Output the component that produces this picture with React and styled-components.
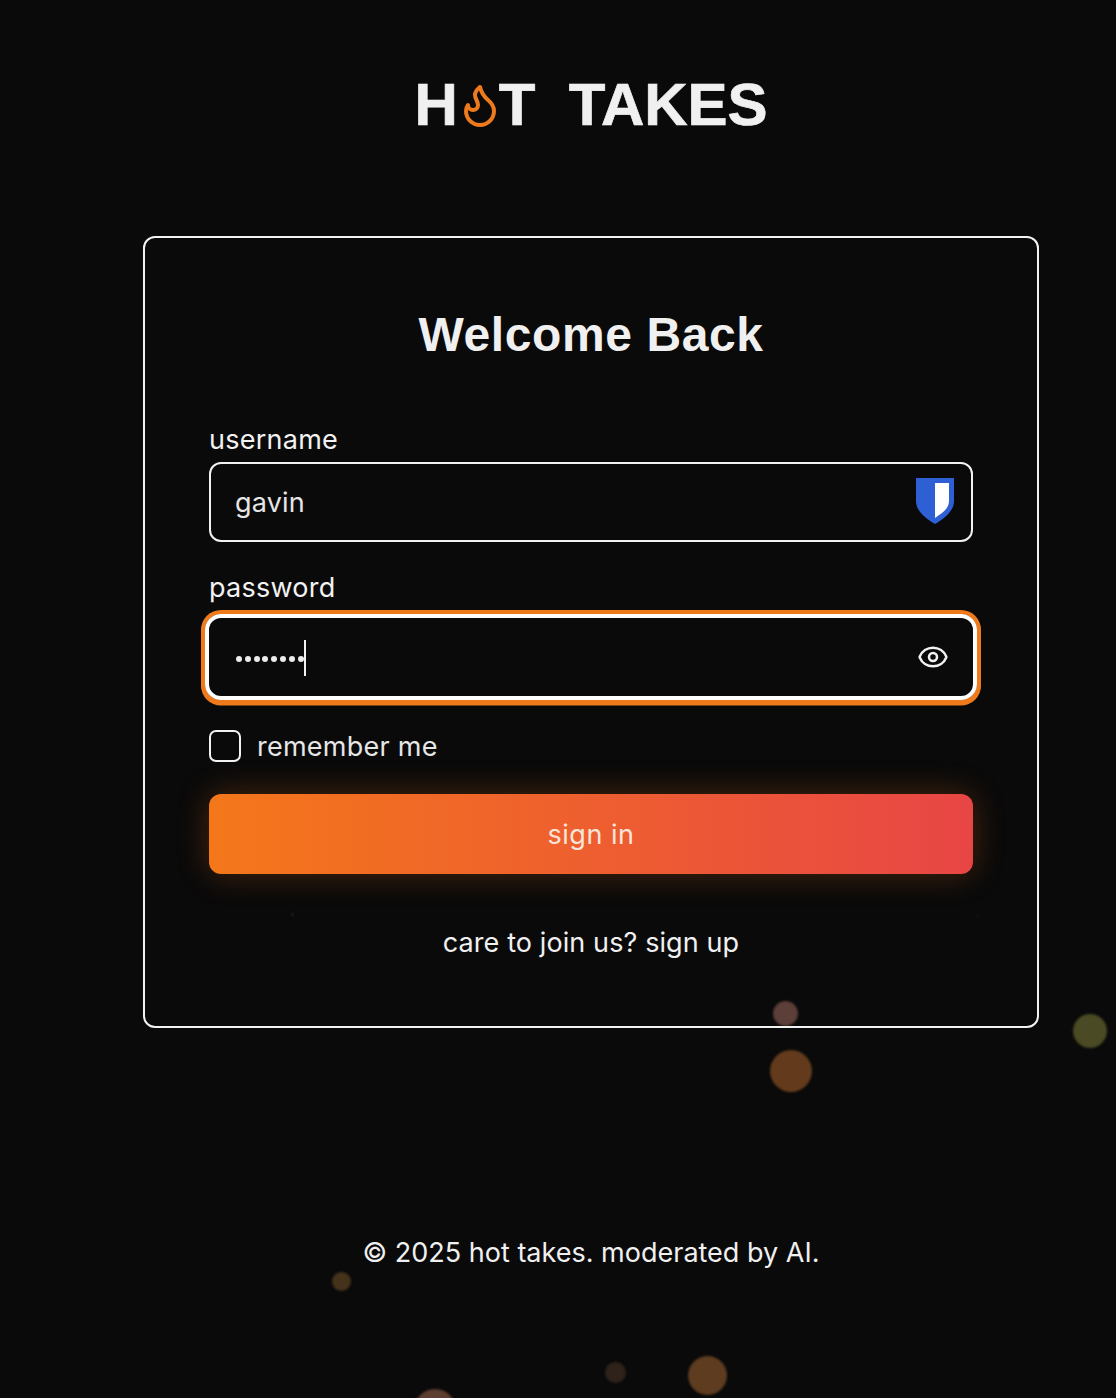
import React from 'react';
import styled, { createGlobalStyle } from 'styled-components';
import { Flame, Eye } from 'lucide-react';

const GlobalStyle = createGlobalStyle`
  html, body {
    margin: 0;
    padding: 0;
    background: #0a0a0a;
  }
  body {
    font-family: Inter, "Liberation Sans", sans-serif;
    color: #f2f2f2;
  }
`;

const particles = [
  { x: 785, y: 1013, size: 25, color: '#5c3f38' },
  { x: 791, y: 1071, size: 42, color: '#633b1c' },
  { x: 1090, y: 1031, size: 34, color: '#4a4a25' },
  { x: 341, y: 1281, size: 19, color: '#44321a' },
  { x: 615, y: 1372, size: 21, color: '#2e221a' },
  { x: 707, y: 1375, size: 39, color: '#5d3c20' },
  { x: 435, y: 1410, size: 42, color: '#5d3f2f' },
  { x: 292, y: 914, size: 3, color: '#222222' },
  { x: 978, y: 916, size: 2, color: '#1c1c1c' },
];

const Page = styled.div`
  position: relative;
  box-sizing: border-box;
  height: 1398px;
  overflow: hidden;
  padding: 74px 77px 0 143px;
  display: flex;
  flex-direction: column;
  align-items: center;
`;

const Particle = styled.div`
  position: absolute;
  width: ${p => p.$size}px;
  height: ${p => p.$size}px;
  left: ${p => p.$x - p.$size / 2}px;
  top: ${p => p.$y - p.$size / 2}px;
  border-radius: 50%;
  background: ${p => p.$color};
  filter: blur(1px);
`;

const Logo = styled.div`
  height: 60px;
  display: flex;
  align-items: center;
  font-family: "Liberation Sans", Arial, sans-serif;
  font-weight: 700;
  font-size: 60px;
  color: #f0f0f0;
  -webkit-text-stroke: 0.7px #f0f0f0;
  white-space: pre;
`;

const LogoFlame = styled(Flame)`
  flex: none;
  margin: 2px -5px 0 -2px;
  color: #ee7a1c;
`;

const Card = styled.main`
  position: relative;
  box-sizing: border-box;
  width: 896px;
  height: 792px;
  margin-top: 102px;
  padding: 64px;
  border: 2px solid #f2f2f2;
  border-radius: 12px;
`;

const Title = styled.h1`
  margin: 2px 0 58px;
  height: 62px;
  line-height: 62px;
  text-align: center;
  font-family: "Liberation Sans", Arial, sans-serif;
  font-size: 48px;
  font-weight: 700;
  letter-spacing: 0.6px;
  color: #f0f0f0;
`;

const Label = styled.label`
  display: block;
  height: 32px;
  line-height: 32px;
  margin-top: ${p => p.$top || 0}px;
  font-size: 27px;
  letter-spacing: 0.25px;
  color: #f2f2f2;
`;

const Field = styled.div`
  box-sizing: border-box;
  height: 80px;
  margin-top: 6px;
  display: flex;
  align-items: center;
  justify-content: space-between;
  padding: 0 17px 0 24px;
  border: 2px solid #f2f2f2;
  border-radius: 12px;
`;

const FocusedField = styled(Field)`
  height: 86px;
  margin: 10px -4px 0;
  padding: 0 24px 0 27px;
  border: 4px solid #ffffff;
  border-radius: 16px;
  box-shadow: 0 0 0 4px #ee7a1c, 0 1.5px 0 4px #ee7a1c;
`;

const FieldText = styled.span`
  font-size: 27px;
  letter-spacing: 0.2px;
  color: #e6e6e6;
`;

const Shield = styled.svg`
  margin-top: -3px;
`;

const Dots = styled.span`
  display: flex;
  align-items: center;
  gap: 2.8px;
  margin-top: 2px;
`;

const Dot = styled.i`
  display: block;
  width: 6px;
  height: 6px;
  margin-top: 1px;
  border-radius: 50%;
  background: #ececec;
`;

const Caret = styled.i`
  display: block;
  width: 2px;
  height: 36px;
  margin-left: -2.8px;
  background: #f2f2f2;
`;

const RememberRow = styled.div`
  display: flex;
  align-items: center;
  gap: 16px;
  margin-top: 30px;
  height: 32px;
`;

const Check = styled.span`
  box-sizing: border-box;
  width: 32px;
  height: 32px;
  border: 2px solid #f2f2f2;
  border-radius: 7px;
`;

const RememberText = styled.span`
  font-size: 27px;
  letter-spacing: 0.25px;
  color: #e6e6e6;
`;

const SignIn = styled.button`
  display: block;
  width: 100%;
  height: 80px;
  margin-top: 32px;
  border: 0;
  border-radius: 12px;
  background: linear-gradient(90deg, #f4771a, #e84645);
  box-shadow: 0 0 32px rgba(249, 115, 22, 0.27);
  font-family: inherit;
  font-size: 27px;
  letter-spacing: 0.5px;
  color: #f8e4d8;
`;

const JoinLine = styled.p`
  margin: 53px 0 0;
  height: 32px;
  line-height: 32px;
  text-align: center;
  font-size: 27px;
  letter-spacing: 0.1px;
  color: #f0f0f0;
`;

const Footer = styled.footer`
  margin-top: 207px;
  height: 36px;
  line-height: 36px;
  font-size: 27px;
  color: #f0f0f0;
`;

const ShieldIcon = () => (
  <Shield width="38" height="46" viewBox="0 0 38 46">
    <path d="M0 0h38v23c0 10-10 18-19 23C10 41 0 33 0 23z" fill="#2f5fd4" />
    <path d="M19 5h14v18c0 8-7 12-14 17z" fill="#ffffff" />
  </Shield>
);

const App = () => (
  <Page>
    <GlobalStyle />
    {particles.map(d => (
      <Particle key={`${d.x}-${d.y}`} $x={d.x} $y={d.y} $size={d.size} $color={d.color} />
    ))}
    <Logo>
      H
      <LogoFlame size={48} strokeWidth={2} />
      T  TAKES
    </Logo>
    <Card>
      <Title>Welcome Back</Title>
      <Label>username</Label>
      <Field>
        <FieldText>gavin</FieldText>
        <ShieldIcon />
      </Field>
      <Label $top={30}>password</Label>
      <FocusedField>
        <Dots>
          {Array.from({ length: 8 }, (_, i) => <Dot key={i} />)}
          <Caret />
        </Dots>
        <Eye size={32} strokeWidth={1.9} color="#f2f2f2" />
      </FocusedField>
      <RememberRow>
        <Check />
        <RememberText>remember me</RememberText>
      </RememberRow>
      <SignIn>sign in</SignIn>
      <JoinLine>care to join us? sign up</JoinLine>
    </Card>
    <Footer>© 2025 hot takes. moderated by AI.</Footer>
  </Page>
);

export default App;
